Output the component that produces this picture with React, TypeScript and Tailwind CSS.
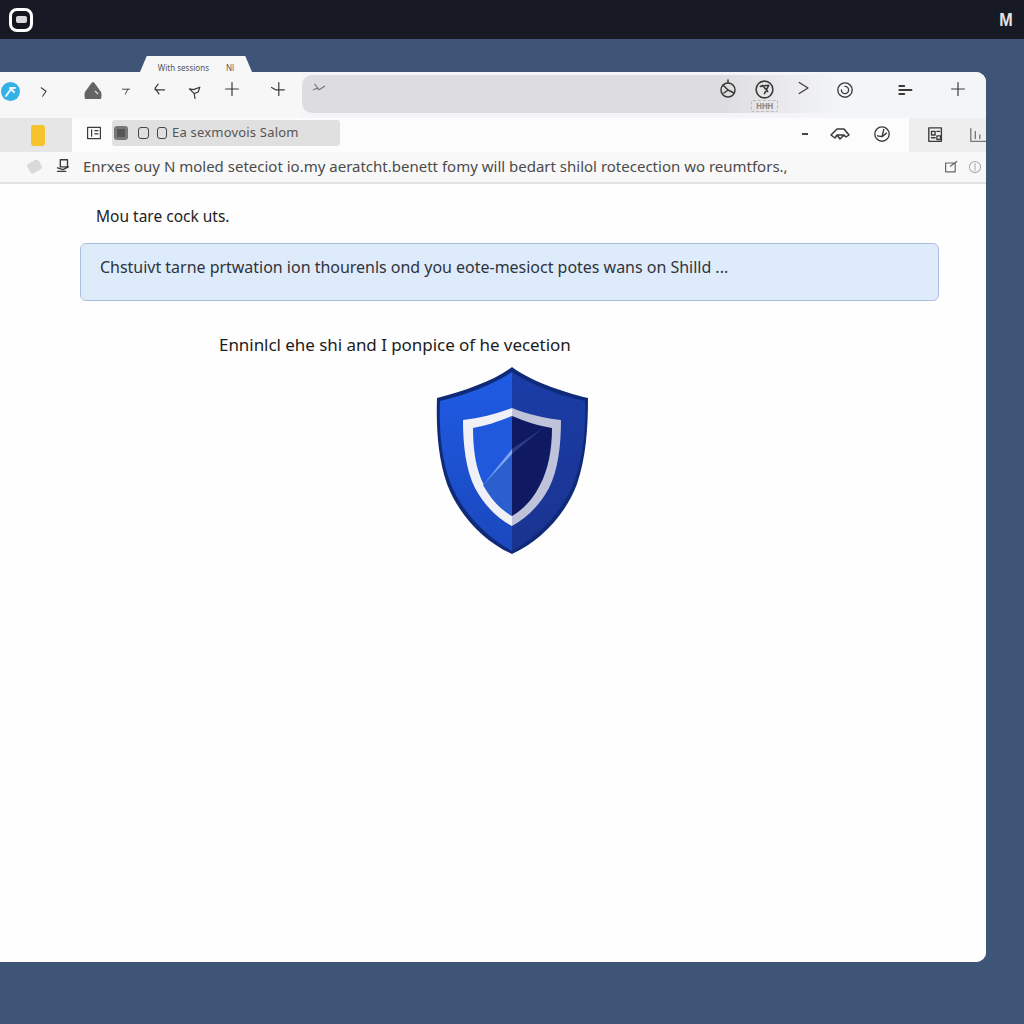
import React from "react";

const Ic = ({ w = 18, className = "", children }: { w?: number; className?: string; children: React.ReactNode }) => (
  <svg width={w} height={w} viewBox="0 0 20 20" fill="none" stroke="#3a3a3a" strokeWidth="1.5" strokeLinecap="round" strokeLinejoin="round" className={className}>
    {children}
  </svg>
);

const Shield = () => (
  <svg width="154" height="190" viewBox="0 0 154 190" className="block">
    <defs>
      <linearGradient id="sl" x1="0" y1="0" x2="0" y2="1">
        <stop offset="0" stopColor="#1f5ce4" />
        <stop offset="1" stopColor="#1a47bd" />
      </linearGradient>
      <linearGradient id="sr" x1="0" y1="0" x2="0" y2="1">
        <stop offset="0" stopColor="#1a3da6" />
        <stop offset="1" stopColor="#1a3390" />
      </linearGradient>
    </defs>
    <path d="M77 1C60 14 30 25 2 32C1 62 3 92 12 118C24 150 50 176 77 188C104 176 130 150 142 118C151 92 153 62 153 32C124 25 94 14 77 1Z" fill="#0f2a78" />
    <path d="M77 6C60 18 32 29 5 35C4 63 6 91 15 116C27 147 52 171 77 185Z" fill="url(#sl)" />
    <path d="M77 6C94 18 122 29 150 35C151 63 148 91 139 116C127 147 102 171 77 185Z" fill="url(#sr)" />
    <path d="M77 42C62 48 45 52 28 54C28 80 31 104 40 122C49 139 62 152 77 160Z" fill="#f0f1f6" />
    <path d="M77 42C92 48 109 52 126 54C126 80 123 104 114 122C105 139 92 152 77 160Z" fill="#bfc3da" />
    <path d="M77 50C65 55 51 60 38 62C38 84 41 104 49 119C56 133 65 143 77 150Z" fill="#2059dc" />
    <path d="M77 50C89 55 104 60 117 62C117 84 113 104 105 119C98 133 89 143 77 150Z" fill="#0f1a63" />
    <path d="M48 119L77 88V150C65 143 55 132 48 119Z" fill="#2b5fce" />
    <path d="M48 119L77 88L77 83Z" fill="#7ea6f2" />
    <path d="M77 88L108 62L77 83Z" fill="#2d3b85" />
  </svg>
);

export default function App() {
  return (
    <div className="min-h-[1024px] bg-[#3e5578] font-['Noto_Sans',sans-serif] flex flex-col">
      <header className="h-[39px] bg-[#171a24] flex items-center justify-between pl-[9px] pr-[10px] shrink-0">
        <div className="w-[24px] h-[24px] rounded-[8px] border-[3px] border-white bg-[#14161e] flex items-center justify-center">
          <div className="w-[11px] h-[7px] rounded-[2px] bg-[#d8d8d8]" />
        </div>
        <span className="text-[#e4e4e4] text-[19px] font-bold leading-none font-['Liberation_Sans',sans-serif] scale-x-[0.85]">M</span>
      </header>

      <div className="flex flex-col w-[986px] mt-[17px]">
        <div className="h-[16px] w-[112px] ml-[140px] bg-[#f7f7f8] flex items-center justify-center gap-[17px] text-[8px] text-[#555] pt-[8px] [clip-path:polygon(6%_0,94%_0,100%_100%,0_100%)]">
          <span className="whitespace-nowrap">With sessions</span>
          <span>Nl</span>
        </div>

        <div className="h-[890px] bg-white rounded-r-[10px] overflow-hidden flex flex-col">
          {/* row 1 */}
          <div className="h-[46px] bg-[#f4f5f7] flex shrink-0">
            <div className="w-[302px] bg-[#f7f7f8] flex items-center relative">
              <div className="absolute left-[1px] top-[10px] w-[19px] h-[19px] rounded-full bg-[#35b1e6] flex items-center justify-center">
                <svg width="13" height="13" viewBox="0 0 13 13" fill="none" stroke="#e8f6fd" strokeWidth="2" strokeLinecap="round"><path d="M2 11L7 4L10 7M6 3l5 0" /></svg>
              </div>
              <Ic w={14} className="absolute left-[37px] top-[13px]"><path d="M6 4l7 5-5 7" /></Ic>
              <svg width="18" height="19" viewBox="0 0 18 19" className="absolute left-[84px] top-[9px]"><path d="M9 1Q10 1 12 4L17 11Q18 13 17 18H1Q0 13 1 11L6 4Q8 1 9 1Z" fill="#646464" /><path d="M11 10l3 3" stroke="#ddd" strokeWidth="1.2" /></svg>
              <Ic w={12} className="absolute left-[120px] top-[13px]"><path d="M4 7h12M13 7l-4 8" /></Ic>
              <Ic w={16} className="absolute left-[151px] top-[9px]"><path d="M5 11h12M9 4L5 9l5 7" /></Ic>
              <Ic w={16} className="absolute left-[187px] top-[12px]"><path d="M3 6l5 1 8-3-2 6-5 2-6-6zM9 12l1 6" /></Ic>
              <Ic w={16} className="absolute left-[224px] top-[9px]"><path d="M10 2v16M2 10h16" /></Ic>
              <Ic w={16} className="absolute left-[270px] top-[9px]"><path d="M11 2v16M2 8l5 3h11" /></Ic>
            </div>
            <div className="w-[418px] h-[38px] mt-[3px] bg-[#dddddf] rounded-l-[10px] flex items-start pt-[7px] pl-[10px]">
              <Ic w={14}><path d="M4 3l6 8M2 11l5-2 3 2 8-5" stroke="#777" /></Ic>
            </div>
            <div className="flex-1 relative h-[38px] mt-[3px] bg-linear-to-r from-[#dddddf] to-[#f4f5f7] to-45%">
              <Ic w={20} className="absolute left-[-2px] top-[4px]"><circle cx="10" cy="11" r="7" /><path d="M10 1v3M5 6l5 5 6 3M6 14l4-3" /></Ic>
              <Ic w={21} className="absolute left-[34px] top-[4px]"><circle cx="10" cy="10" r="8" /><path d="M6 7l8-1-4 8M8 6l5 6" /></Ic>
              <div className="absolute left-[31px] top-[25px] w-[27px] h-[12px] flex items-center justify-center text-[8px] font-bold leading-none text-[#8a8a8a] tracking-[-0.5px] border border-dashed border-[#bbb] rounded-[2px]">HHH</div>
              <Ic w={16} className="absolute left-[76px] top-[5px]"><path d="M4 3l11 7-11 7" /></Ic>
              <Ic w={18} className="absolute left-[116px] top-[6px]"><circle cx="10" cy="10" r="8" /><path d="M10 6a4 4 0 1 1-4 4" /></Ic>
              <Ic w={16} className="absolute left-[177px] top-[7px]"><path d="M3 5h6M3 10h15M3 15h6" strokeWidth="2.6" /></Ic>
              <Ic w={16} className="absolute left-[230px] top-[6px]"><path d="M10 2v16M2 10h16" /></Ic>
            </div>
          </div>

          {/* row 2 */}
          <div className="h-[34px] bg-[#fcfcfc] flex shrink-0 items-stretch">
            <div className="w-[72px] bg-[#e6e6e6] flex items-center justify-center pl-[4px]">
              <div className="w-[14px] h-[21px] rounded-[3px] bg-[#f5c32c]" />
            </div>
            <div className="flex items-start pt-[2px] pl-[14px] flex-1 relative">
              <Ic w={16} className="mt-[5px]"><rect x="2" y="3" width="16" height="14" /><path d="M7 6v8M11 7h4M11 11h4" /></Ic>
              <div className="ml-[10px] w-[228px] h-[26px] rounded-[3px] bg-[#e0e0e0] flex items-center pl-[2px] gap-[5px] text-[13px] text-[#555] whitespace-nowrap">
                <div className="w-[14px] h-[14px] rounded-[3px] bg-[#555] border-[3px] border-[#777]" />
                <div className="ml-[5px] w-[11px] h-[12px] rounded-[3px] border border-[#444]" />
                <div className="ml-[3px] w-[10px] h-[12px] rounded-[3px] border border-[#444]" />
                <span className="tracking-[0.2px]">Ea sexmovois Salom</span>
              </div>
              <span className="absolute left-[730px] top-[15px] w-[6px] h-[1.5px] bg-[#444]" />
              <Ic w={20} className="absolute left-[758px] top-[6px]"><path d="M1 11l6-6h7l5 6-3 2-2-2H7l-2 3zM7 11l3 4 4-4" /></Ic>
              <Ic w={18} className="absolute left-[801px] top-[7px]"><circle cx="10" cy="10" r="8" /><path d="M5 12l5 1 2-8M10 13l5-4" /></Ic>
            </div>
            <div className="w-[77px] bg-[#eeeeef] relative overflow-hidden">
              <Ic w={18} className="absolute left-[18px] top-[8px]"><rect x="2" y="2" width="14" height="15" /><path d="M5 6h4v4H5zM11 6h3M11 11h4v4h-4zM5 13h4" /></Ic>
              <Ic w={18} className="absolute left-[60px] top-[8px]"><path d="M2 3v14h18M7 6v8M12 10v4" stroke="#777" /></Ic>
            </div>
          </div>

          {/* row 3 */}
          <div className="h-[32px] bg-[#f8f8f8] border-b-[2px] border-[#e1e2e4] flex items-center shrink-0 relative">
            <div className="absolute left-[28px] top-[9px] w-[13px] h-[11px] rounded-[3px] bg-[#d9d9d9] rotate-[-30deg]" />
            <Ic w={18} className="absolute left-[54px] top-[5px]"><path d="M7 3h8v8H7zM4 12l6 2 6-3M4 16h9" /></Ic>
            <p className="absolute left-[83px] top-[4px] text-[15px] leading-[20px] text-[#4b4b4b] whitespace-nowrap">
              Enrxes ouy N moled seteciot io.my aeratcht.benett fomy will bedart shilol rotecection wo reumtfors.,
            </p>
            <Ic w={16} className="absolute left-[944px] top-[7px]"><path d="M2 5h12v11H2zM8 9l8-6" stroke="#666" /></Ic>
            <Ic w={14} className="absolute left-[968px] top-[8px]"><circle cx="10" cy="10" r="8" stroke="#aaa" /><path d="M10 5v10" stroke="#aaa" /></Ic>
          </div>

          {/* content */}
          <main className="flex-1 flex flex-col bg-[#fefefe] pt-[22px] pl-[80px] pr-[47px]">
            <p className="pl-[16px] text-[15.5px] leading-[20px] text-[#222]">Mou tare cock uts.</p>
            <div className="mt-[17px] h-[58px] rounded-[6px] border border-[#a9bfdc] bg-[#deebfb] flex items-center pl-[19px] pb-[10px]">
              <span className="text-[16px] text-[#30343c] whitespace-nowrap tracking-[-0.02px]">
                Chstuivt tarne prtwation ion thourenls ond you eote-mesioct potes wans on Shilld ...
              </span>
            </div>
            <p className="mt-[33px] pl-[139px] text-[17px] leading-[22px] text-[#1c1c1c] whitespace-nowrap tracking-[-0.05px]">
              Enninlcl ehe shi and I ponpice of he vecetion
            </p>
            <div className="mt-[10px] pl-[355px]">
              <Shield />
            </div>
          </main>
        </div>
      </div>
    </div>
  );
}
